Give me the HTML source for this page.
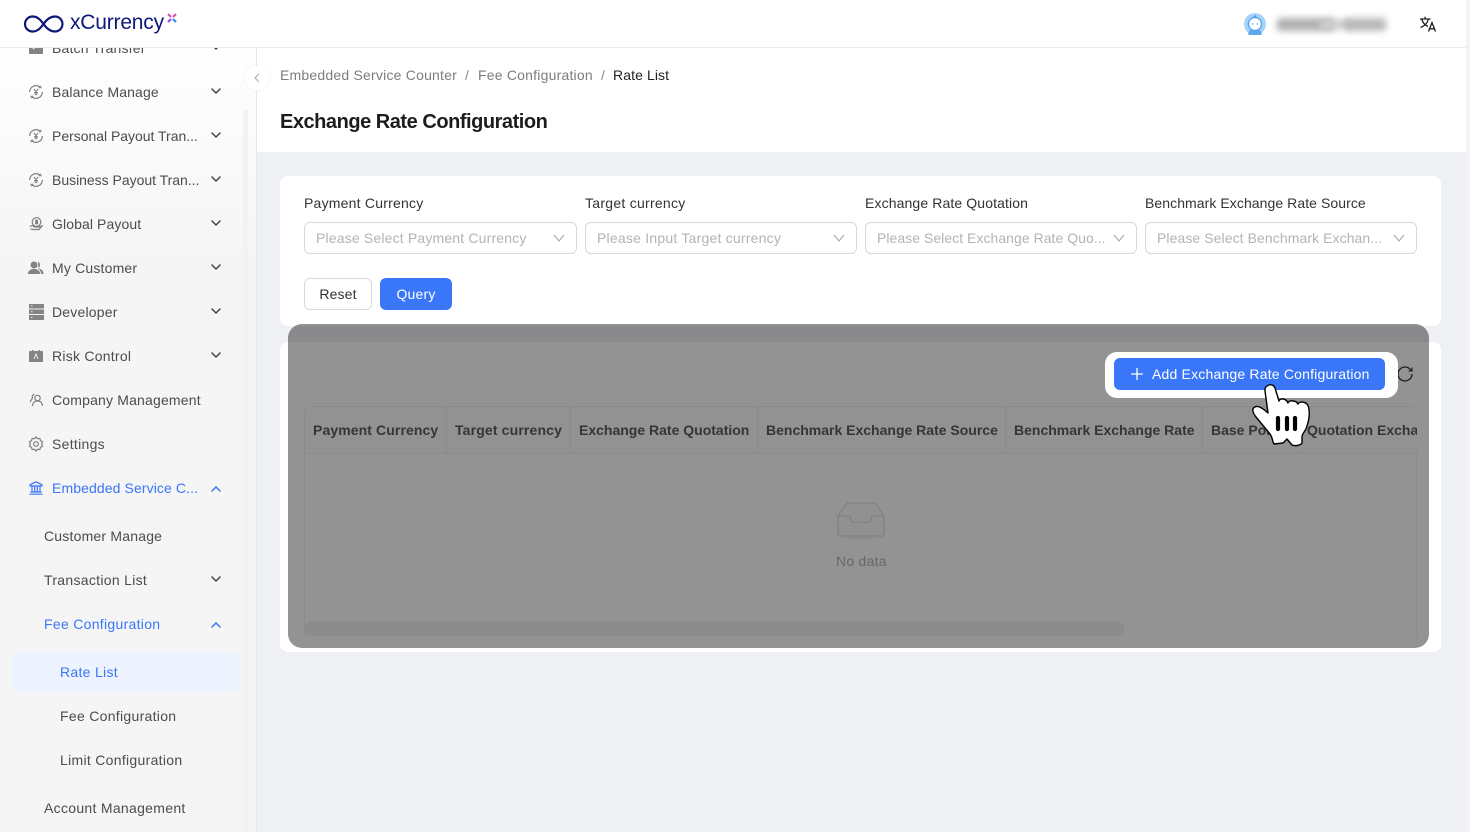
<!DOCTYPE html>
<html lang="en"><head><meta charset="utf-8"><title>Exchange Rate Configuration</title>
<style>
*{box-sizing:border-box}
html,body{margin:0;padding:0;width:1470px;height:832px;overflow:hidden;background:#eff0f4;font-family:"Liberation Sans",sans-serif;font-size:14px;color:#3f3f3f}
.a{position:absolute}
.t{position:absolute;white-space:nowrap;line-height:20px;letter-spacing:.18px}
.side{position:absolute;left:0;top:0;width:257px;height:832px;background:linear-gradient(180deg,#fff 40px,#f5f5f5 260px);border-right:1px solid #e6e6e8}
.m{color:#4c4c4c}
.b{color:#3a76f8}
.ic{position:absolute;fill:none;stroke:#808080;stroke-width:1.2}
.ch{position:absolute;fill:none;stroke:#444;stroke-width:1.5;stroke-linecap:round;stroke-linejoin:round}
.inp{position:absolute;top:222px;height:32px;border:1px solid #d9d9d9;border-radius:6px;background:#fff}
.inp span{position:absolute;left:11px;top:5px;white-space:nowrap;line-height:20px;color:#b3b3b3}
.inp svg{position:absolute;right:11px;top:10px;fill:none;stroke:#a8a8a8;stroke-width:1.1}
.lab{position:absolute;top:193px;white-space:nowrap;line-height:20px;color:#333}
.th{position:absolute;top:420px;white-space:nowrap;line-height:20px;font-weight:bold;color:#5c5c5c;letter-spacing:0}
.v{position:absolute;top:406px;width:1px;height:48px;background:#f0f0f0}
</style></head><body>

<div class="a" style="left:257px;top:48px;width:1213px;height:104px;background:#fff"></div>
<div class="a" style="left:1466px;top:0;width:4px;height:832px;background:#f3f3f5"></div>

<div class="t" style="left:280px;top:65px;color:#7d7d7d;letter-spacing:.21px">Embedded Service Counter</div>
<div class="t" style="left:465px;top:65px;color:#8a8a8a">/</div>
<div class="t" style="left:478px;top:65px;color:#7d7d7d;letter-spacing:.21px">Fee Configuration</div>
<div class="t" style="left:601px;top:65px;color:#8a8a8a">/</div>
<div class="t" style="left:613px;top:65px;color:#222;letter-spacing:.1px">Rate List</div>
<div class="t" style="left:280px;top:109px;font-size:20px;line-height:26px;font-weight:bold;color:#1c1c1c;letter-spacing:-.47px">Exchange Rate Configuration</div>

<!-- filter panel -->
<div class="a" style="left:280px;top:176px;width:1161px;height:150px;background:#fff;border-radius:8px"></div>
<div class="lab" style="left:304px;letter-spacing:.22px">Payment Currency</div>
<div class="lab" style="left:585px;letter-spacing:.27px">Target currency</div>
<div class="lab" style="left:865px;letter-spacing:.12px">Exchange Rate Quotation</div>
<div class="lab" style="left:1145px;letter-spacing:.07px">Benchmark Exchange Rate Source</div>
<div class="inp" style="left:304px;width:273px"><span style="letter-spacing:.17px">Please Select Payment Currency</span><svg width="12" height="10" viewBox="0 0 12 10"><path d="M1 2l5 6 5-6"/></svg></div>
<div class="inp" style="left:585px;width:272px"><span style="letter-spacing:.22px">Please Input Target currency</span><svg width="12" height="10" viewBox="0 0 12 10"><path d="M1 2l5 6 5-6"/></svg></div>
<div class="inp" style="left:865px;width:272px"><span style="letter-spacing:.04px">Please Select Exchange Rate Quo...</span><svg width="12" height="10" viewBox="0 0 12 10"><path d="M1 2l5 6 5-6"/></svg></div>
<div class="inp" style="left:1145px;width:272px"><span style="letter-spacing:.08px">Please Select Benchmark Exchan...</span><svg width="12" height="10" viewBox="0 0 12 10"><path d="M1 2l5 6 5-6"/></svg></div>
<div class="a" style="left:304px;top:278px;width:68px;height:32px;border:1px solid #d9d9d9;border-radius:6px;background:#fff;text-align:center;line-height:30px;color:#333;letter-spacing:.15px">Reset</div>
<div class="a" style="left:380px;top:278px;width:72px;height:32px;border-radius:6px;background:#3a76f8;text-align:center;line-height:32px;color:#fff;letter-spacing:.2px">Query</div>

<!-- table panel -->
<div class="a" style="left:280px;top:342px;width:1161px;height:310px;background:#fff;border-radius:8px"></div>
<div class="a" style="left:304px;top:406px;width:1113px;height:230px;border:1px solid #efefef;border-bottom:0;border-radius:8px 8px 0 0"></div>
<div class="a" style="left:305px;top:407px;width:1111px;height:47px;background:#fdfdfd;border-bottom:1px solid #f0f0f0"></div>
<div class="v" style="left:446px"></div><div class="v" style="left:570px"></div><div class="v" style="left:757px"></div><div class="v" style="left:1005px"></div><div class="v" style="left:1202px"></div><div class="v" style="left:1298px"></div>
<div class="th" style="left:313px;letter-spacing:.1px">Payment Currency</div>
<div class="th" style="left:455px;letter-spacing:.15px">Target currency</div>
<div class="th" style="left:579px">Exchange Rate Quotation</div>
<div class="th" style="left:766px">Benchmark Exchange Rate Source</div>
<div class="th" style="left:1014px">Benchmark Exchange Rate</div>
<div class="th" style="left:1211px">Base Point</div>
<div class="a" style="left:1299px;top:407px;width:118px;height:46px;overflow:hidden;background:#fdfdfd"><div class="th" style="left:8px;top:13px">Quotation Exchange</div></div>
<div class="a" style="left:305px;top:621px;width:819px;height:15px;background:#f3f3f3;border-radius:7px"></div>
<svg class="a" style="left:836px;top:500px" width="50" height="44" viewBox="0 0 50 44" fill="none"><ellipse cx="25" cy="35" rx="24" ry="5" fill="#f5f5f5"/><path d="M2 16 11 3h28l9 13v18a2 2 0 0 1-2 2H4a2 2 0 0 1-2-2z" fill="#fcfcfc" stroke="#dcdcdc" stroke-width="1.1"/><path d="M2 16h11c1 0 1.500 .5 1.500 2 0 3 1 4 3 4h15c2 0 3-1 3-4 0-1.500 .5-2 1.500-2H48" stroke="#dcdcdc" stroke-width="1.1"/></svg>
<div class="t" style="left:836px;top:551px;color:#b5b5b5;letter-spacing:.25px">No data</div>
<svg class="a" style="left:1396px;top:365px" width="18" height="18" viewBox="0 0 18 18" fill="none" stroke="#333" stroke-width="1.3"><path d="M16 9a7 7 0 1 1-2.200-5.100L16 6"/><path d="M16 2.500V6h-3.500" stroke-width="1.100"/></svg>

<!-- sidebar -->
<div class="side"></div>
<div class="a" style="left:243px;top:110px;width:5px;height:722px;background:#f2f2f2;border-radius:3px"></div>
<div class="a" style="left:12px;top:652px;width:227px;height:40px;background:#edf3fe;border-radius:6px"></div>

<div class="t m" style="left:52px;top:38px">Batch Transfer</div>
<svg class="a" style="left:29px;top:40px" width="14" height="14" viewBox="0 0 14 14"><rect width="14" height="14" rx="1" fill="#848484"/><path d="M4 9l5-5" stroke="#fff" stroke-width="1.200"/></svg>
<svg class="ch" style="left:211px;top:44px" width="10" height="7" viewBox="0 0 10 7"><path d="M1 1l4 4 4-4"/></svg>

<div class="t m" style="left:52px;top:82px;letter-spacing:.12px">Balance Manage</div>
<div class="t m" style="left:52px;top:126px;letter-spacing:-.02px">Personal Payout Tran...</div>
<div class="t m" style="left:52px;top:170px;letter-spacing:-.02px">Business Payout Tran...</div>
<div class="t m" style="left:52px;top:214px;letter-spacing:.1px">Global Payout</div>
<div class="t m" style="left:52px;top:258px">My Customer</div>
<div class="t m" style="left:52px;top:302px;letter-spacing:.2px">Developer</div>
<div class="t m" style="left:52px;top:346px;letter-spacing:.25px">Risk Control</div>
<div class="t m" style="left:52px;top:390px">Company Management</div>
<div class="t m" style="left:52px;top:434px;letter-spacing:.3px">Settings</div>
<div class="t b" style="left:52px;top:478px;letter-spacing:.1px">Embedded Service C...</div>
<div class="t m" style="left:44px;top:526px;letter-spacing:.2px">Customer Manage</div>
<div class="t m" style="left:44px;top:570px;letter-spacing:.3px">Transaction List</div>
<div class="t b" style="left:44px;top:614px;letter-spacing:.3px">Fee Configuration</div>
<div class="t b" style="left:60px;top:662px;letter-spacing:.3px">Rate List</div>
<div class="t m" style="left:60px;top:706px;letter-spacing:.3px">Fee Configuration</div>
<div class="t m" style="left:60px;top:750px;letter-spacing:.3px">Limit Configuration</div>
<div class="t m" style="left:44px;top:798px;letter-spacing:.3px">Account Management</div>

<!-- sidebar icons -->
<svg class="ic" style="left:29px;top:85px" width="14" height="14" viewBox="0 0 14 14"><path d="M.7 7A6.300 6.300 0 0 1 11.500 2.600M13.300 7A6.300 6.300 0 0 1 2.500 11.400"/><path d="M9.500 2.800h2.300V.8M4.500 11.200H2.200v2" stroke-width="1"/><path d="M5 4 7 6.700 9 4M7 6.700V10.300M5.200 7.500h3.600M5.200 9h3.600" stroke-width="1.100"/></svg>
<svg class="ic" style="left:29px;top:129px" width="14" height="14" viewBox="0 0 14 14"><path d="M.7 7A6.300 6.300 0 0 1 11.500 2.600M13.300 7A6.300 6.300 0 0 1 2.500 11.400"/><path d="M9.500 2.800h2.300V.8M4.500 11.200H2.200v2" stroke-width="1"/><path d="M5 4 7 6.700 9 4M7 6.700V10.300M5.200 7.500h3.600M5.200 9h3.600" stroke-width="1.100"/></svg>
<svg class="ic" style="left:29px;top:173px" width="14" height="14" viewBox="0 0 14 14"><path d="M.7 7A6.300 6.300 0 0 1 11.500 2.600M13.300 7A6.300 6.300 0 0 1 2.500 11.400"/><path d="M9.500 2.800h2.300V.8M4.500 11.200H2.200v2" stroke-width="1"/><path d="M5 4 7 6.700 9 4M7 6.700V10.300M5.200 7.500h3.600M5.200 9h3.600" stroke-width="1.100"/></svg>
<svg class="ic" style="left:29px;top:217px" width="14" height="14" viewBox="0 0 14 14"><circle cx="7.500" cy="5" r="4.300"/><path d="M9 3.500H6.700v1.500h1.800v1.500H6M7.500 2.500v5M1 9.500l2-1 3 1.500h3l4-1-3 3.500H4l-2.500-.5"/></svg>
<svg class="a" style="left:28px;top:261px" width="16" height="14" viewBox="0 0 16 14" fill="#848484"><circle cx="6" cy="4" r="3.500"/><path d="M0 13c0-3.500 2.500-5 6-5s6 1.500 6 5z"/><path d="M10 .8a3.500 3.500 0 0 1 0 6.400c3 .5 5.500 2 5.500 5.800H13c0-2.500-1-4-2.500-5z"/></svg>
<svg class="a" style="left:29px;top:304px" width="15" height="16" viewBox="0 0 15 16" fill="#848484"><rect width="15" height="4.500"/><rect y="5.500" width="15" height="4.500"/><rect y="11" width="15" height="5"/><path d="M2 2h1.500M2 7.700h1.500M2 13.500h1.500" stroke="#eee"/></svg>
<svg class="a" style="left:29px;top:350px" width="14" height="12" viewBox="0 0 14 12"><rect y="1" width="14" height="11" fill="#848484"/><rect x="3" width="1.500" height="2" fill="#848484"/><rect x="9.500" width="1.500" height="2" fill="#848484"/><path d="M5 9l2-5 2 5" stroke="#eee" fill="none"/></svg>
<svg class="ic" style="left:29px;top:393px" width="15" height="14" viewBox="0 0 15 14"><circle cx="8.500" cy="5" r="2.700"/><path d="M3.500 13c0-3 2-5 5-5s5 2 5 5M5.500 1.500C3.500 1.500 2.800 3.500 3.500 5L1 9"/></svg>
<svg class="ic" style="left:28px;top:436px" width="16" height="16" viewBox="0 0 16 16"><path d="M8 1l1.500 1.700 2.300-.3.700 2.200 2 1.200-.9 2.200.9 2.200-2 1.200-.7 2.200-2.300-.3L8 15l-1.500-1.700-2.300.3-.7-2.200-2-1.200L2.400 8l-.9-2.200 2-1.200.7-2.200 2.300.3z"/><circle cx="8" cy="8" r="2.300"/></svg>
<svg class="ic" style="left:29px;top:481px;stroke:#3a76f8" width="14" height="14" viewBox="0 0 14 14"><path d="M7 .8 1 3.800V5h12V3.800zM3 5v6M5.700 5v6M8.300 5v6M11 5v6M1.500 11h11M.5 13.200h13"/></svg>

<!-- chevrons -->
<svg class="ch" style="left:211px;top:88px" width="10" height="7" viewBox="0 0 10 7"><path d="M1 1l4 4 4-4"/></svg>
<svg class="ch" style="left:211px;top:132px" width="10" height="7" viewBox="0 0 10 7"><path d="M1 1l4 4 4-4"/></svg>
<svg class="ch" style="left:211px;top:176px" width="10" height="7" viewBox="0 0 10 7"><path d="M1 1l4 4 4-4"/></svg>
<svg class="ch" style="left:211px;top:220px" width="10" height="7" viewBox="0 0 10 7"><path d="M1 1l4 4 4-4"/></svg>
<svg class="ch" style="left:211px;top:264px" width="10" height="7" viewBox="0 0 10 7"><path d="M1 1l4 4 4-4"/></svg>
<svg class="ch" style="left:211px;top:308px" width="10" height="7" viewBox="0 0 10 7"><path d="M1 1l4 4 4-4"/></svg>
<svg class="ch" style="left:211px;top:352px" width="10" height="7" viewBox="0 0 10 7"><path d="M1 1l4 4 4-4"/></svg>
<svg class="ch" style="left:211px;top:576px" width="10" height="7" viewBox="0 0 10 7"><path d="M1 1l4 4 4-4"/></svg>
<svg class="ch" style="left:211px;top:485px;stroke:#3a76f8" width="10" height="7" viewBox="0 0 10 7"><path d="M1 6l4-4 4 4"/></svg>
<svg class="ch" style="left:211px;top:621px;stroke:#3a76f8" width="10" height="7" viewBox="0 0 10 7"><path d="M1 6l4-4 4 4"/></svg>

<!-- collapse -->
<div class="a" style="left:245px;top:66px;width:24px;height:24px;border-radius:50%;background:#fff;box-shadow:0 0 4px rgba(0,0,0,.06)"></div>
<svg class="a" style="left:254px;top:73px" width="6" height="10" viewBox="0 0 6 10" fill="none" stroke="#b0b0b0" stroke-width="1.200"><path d="M5 1 1 5l4 4"/></svg>

<!-- topbar -->
<div class="a" style="left:0;top:0;width:1466px;height:48px;background:#fff;border-bottom:1px solid #ebebed"></div>
<svg class="a" style="left:23px;top:14px" width="42" height="20" viewBox="0 0 42 20" fill="none" stroke="#0b1a78" stroke-width="2.200"><path d="M20.500 10C17 5 14 2.500 9.500 2.500a7.500 7.500 0 0 0 0 15C14 17.500 17 15 20.500 10s7-7.500 11.500-7.500a7.500 7.500 0 0 1 0 15C27.500 17.500 24 15 20.500 10z"/></svg>
<div class="t" style="left:70px;top:10px;font-size:21px;line-height:26px;color:#0b1a78;letter-spacing:-.2px">xCurrency</div>
<svg class="a" style="left:167px;top:13px" width="10" height="10" viewBox="0 0 10 10" fill="none" stroke-width="2.200"><path d="M1 1l3 3" stroke="#d94fc0"/><path d="M9 1 6 4" stroke="#e0529c"/><path d="M1 9l3-3" stroke="#7a55ea"/><path d="M9 9 6 6" stroke="#3f86f5"/></svg>

<svg class="a" style="left:1244px;top:13px" width="22" height="22" viewBox="0 0 22 22"><circle cx="11" cy="11" r="11" fill="#a6d2f7"/><path d="M4 21c1-4 3-5 7-5s6 1 7 5a11 11 0 0 1-14 0z" fill="#5fa8f0"/><circle cx="11" cy="11" r="6.500" fill="#fff" stroke="#4f9cee" stroke-width="1.200"/><path d="M8 11h1.500M12.500 11H14" stroke="#4f9cee"/><circle cx="11" cy="3.500" r="1.200" fill="#4f9cee"/></svg>
<div class="a" style="left:1277px;top:18px;width:58px;height:13px;background:#b0b0b0;filter:blur(3.5px);border-radius:3px"></div>
<div class="a" style="left:1320px;top:20px;width:30px;height:9px;background:#cfcfcf;filter:blur(3px)"></div>
<div class="a" style="left:1344px;top:18px;width:42px;height:13px;background:#b8b8b8;filter:blur(3.5px);border-radius:3px"></div>
<svg class="a" style="left:1419px;top:16px" width="18" height="16" viewBox="0 0 18 16" fill="none" stroke="#1c1c1c" stroke-width="1.300"><path d="M1 3h10.500M6 .8V3M9.500 3C8.500 7 5.500 10 1.500 11.500M2.800 3.500C4 7 6.500 9.500 9 10.500"/><path d="M9.500 15.500 13 6.500l3.500 9M10.700 12.800h4.600"/></svg>

<!-- overlay -->
<div class="a" style="left:288px;top:324px;width:1141px;height:324px;border-radius:14px;background:rgba(0,0,0,.425)"></div>
<div class="a" style="left:1105px;top:352px;width:293px;height:46px;border-radius:12px;background:#fff"></div>
<div class="a" style="left:1114px;top:358px;width:271px;height:32px;border-radius:6px;background:#3a76f8"></div>
<svg class="a" style="left:1130px;top:367px" width="14" height="14" viewBox="0 0 14 14" stroke="#fff" stroke-width="1.300"><path d="M7 1v12M1 7h12"/></svg>
<div class="t" style="left:1152px;top:364px;color:#fff;letter-spacing:.19px">Add Exchange Rate Configuration</div>

<!-- hand cursor -->
<svg class="a" style="left:1250px;top:380px" width="64" height="70" viewBox="1250 380 64 70"><path d="M1265 391C1264 385 1273 382 1275 388L1279 401C1280 398 1286 398 1288 403C1289 400 1296 400 1298 404C1299 401 1307 401 1308.500 407C1310 413 1309 420 1307 426C1306 431 1302 433 1302 437L1302 443C1300 446 1294 446 1292 445L1287 439 1283 443 1274 444C1272 441 1273 438 1270 434L1256 417C1252 412 1252 408 1255 407C1258 405 1264 409 1268 413Z" fill="#fff" stroke="#000" stroke-width="1.400" stroke-linejoin="round"/><path d="M1278 418v11M1287 418v11M1295 418v11" stroke="#000" stroke-width="4.200" stroke-linecap="round"/></svg>

</body></html>
